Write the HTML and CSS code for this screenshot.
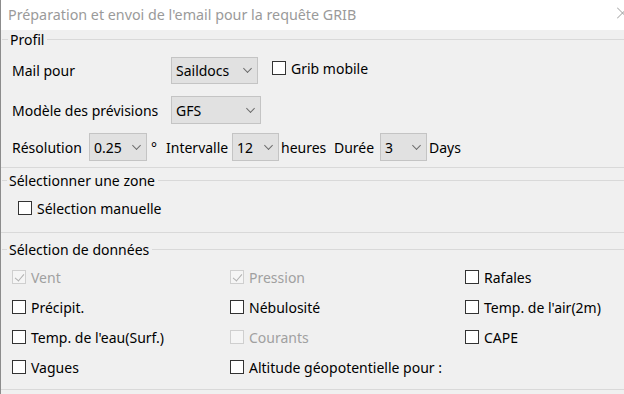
FILE: index.html
```html
<!DOCTYPE html>
<html lang="fr">
<head>
<meta charset="utf-8">
<title>GRIB</title>
<link rel="stylesheet" href="styles.css">
</head>
<body>
<div class="window">
  <div class="titlebar">
    <span class="title">Préparation et envoi de l'email pour la requête GRIB</span>
    <svg class="close" width="7" height="12" viewBox="0 0 7 12"><path d="M0 0.5 L11 11.5 M0 11.5 L11 0.5" stroke="#9a9a9a" stroke-width="1" fill="none"/></svg>
  </div>

  <div class="legend legend-profil"><span>Profil</span></div>
  <div class="row row-mail">
    <span class="lbl lbl-wide">Mail pour</span>
    <span class="combo combo-saildocs"><span>Saildocs</span><i class="chev"></i></span>
    <label class="check check-grib"><span class="box"></span>Grib mobile</label>
  </div>
  <div class="row row-model">
    <span class="lbl lbl-wide">Modèle des prévisions</span>
    <span class="combo combo-gfs"><span>GFS</span><i class="chev"></i></span>
  </div>
  <div class="row row-res">
    <span class="lbl lbl-res">Résolution</span>
    <span class="combo combo-res"><span>0.25</span><i class="chev"></i></span>
    <span class="deg">°</span>
    <span class="lbl lbl-int">Intervalle</span>
    <span class="combo combo-small"><span>12</span><i class="chev"></i></span>
    <span class="lbl lbl-heures">heures</span>
    <span class="lbl lbl-duree">Durée</span>
    <span class="combo combo-small"><span>3</span><i class="chev"></i></span>
    <span class="lbl lbl-days">Days</span>
  </div>
  <div class="sep sep-profil"></div>

  <div class="legend legend-zone"><span>Sélectionner une zone</span></div>
  <div class="row row-zone">
    <label class="check"><span class="box"></span>Sélection manuelle</label>
  </div>
  <div class="sep sep-zone"></div>

  <div class="legend legend-data"><span>Sélection de données</span></div>
  <div class="grid">
    <label class="check disabled"><span class="box checked"></span>Vent</label>
    <label class="check disabled"><span class="box checked"></span>Pression</label>
    <label class="check"><span class="box"></span>Rafales</label>

    <label class="check"><span class="box"></span>Précipit.</label>
    <label class="check"><span class="box"></span>Nébulosité</label>
    <label class="check"><span class="box"></span>Temp. de l'air(2m)</label>

    <label class="check"><span class="box"></span>Temp. de l'eau(Surf.)</label>
    <label class="check disabled"><span class="box"></span>Courants</label>
    <label class="check"><span class="box"></span>CAPE</label>

    <label class="check"><span class="box"></span>Vagues</label>
    <label class="check"><span class="box"></span>Altitude géopotentielle pour :</label>
    <span></span>
  </div>
  <div class="sep sep-data"></div>
</div>
</body>
</html>
```

FILE: styles.css
```css
html, body {
  margin: 0;
  padding: 0;
}
body {
  width: 624px;
  height: 394px;
  overflow: hidden;
  background: #f0f0f0;
  font-family: "Noto Sans", "Open Sans", sans-serif;
  font-size: 14px;
  color: #000;
}
.window {
  height: 394px;
  border-left: 1px solid #8c8c8c;
  box-sizing: border-box;
  display: flex;
  flex-direction: column;
}
.titlebar {
  height: 30px;
  background: #fff;
  display: flex;
  align-items: center;
  justify-content: space-between;
  padding-left: 7px;
  flex: none;
}
.title {
  color: #9a9a9a;
  font-size: 14.3px;
  margin-top: -2px;
}
.close {
  margin-top: -4px;
}

.legend {
  height: 18px;
  display: flex;
  align-items: center;
  flex: none;
}
.legend::before {
  content: "";
  width: 6px;
  border-top: 1px solid #d9d9d9;
  margin-left: 1px;
}
.legend::after {
  content: "";
  flex: 1;
  border-top: 1px solid #d9d9d9;
}
.legend span {
  padding: 0 3px 0 2px;
}
.legend-zone::before,
.legend-data::before {
  width: 5px;
}

.sep {
  border-top: 1px solid #d9d9d9;
  flex: none;
}

.row {
  display: flex;
  align-items: center;
  height: 28px;
  padding-left: 11px;
  flex: none;
}
.row-mail { margin-top: 8px; }
.row-model { margin-top: 12px; }
.row-res { margin-top: 9px; }
.sep-profil { margin-top: 6px; }
.legend-zone { margin-top: 3px; }
.row-zone { margin-top: 9px; height: 20px; padding-left: 17px; }
.sep-zone { margin-top: 14px; }
.legend-data { margin-top: 7px; }
.sep-data { margin-top: 7px; }

.lbl-wide { width: 159px; }
.lbl-res { width: 77px; }
.lbl-int { width: 66px; }
.lbl-heures { width: 53px; margin-left: 2px; }
.lbl-duree { width: 46px; }
.lbl-days { margin-left: 2px; }
.deg { width: 19px; padding-left: 4px; box-sizing: border-box; }

.combo {
  display: flex;
  align-items: center;
  justify-content: space-between;
  height: 28px;
  box-sizing: border-box;
  background: #e1e1e1;
  border: 1px solid #c4c4c4;
  padding: 1px 6px 0 4px;
}
.combo-saildocs { width: 87px; height: 27px; }
.combo-gfs { width: 90px; }
.combo-res { width: 58px; }
.combo-small { width: 47px; }
.chev {
  width: 6px;
  height: 6px;
  border-right: 1px solid #6a6a6a;
  border-bottom: 1px solid #6a6a6a;
  transform: rotate(45deg) scale(0.9, 0.9);
  margin-top: -4px;
}

.check {
  display: flex;
  align-items: center;
  gap: 5px;
  white-space: nowrap;
}
.check-grib { margin-left: 14px; margin-top: -4px; }
.box {
  width: 14px;
  height: 14px;
  box-sizing: border-box;
  border: 1px solid #333;
  background: #fff;
  position: relative;
  flex: none;
}
.disabled { color: #a0a0a0; }
.disabled .box {
  border-color: #cfcfcf;
  background: #f5f5f5;
}
.box.checked::after {
  content: "";
  position: absolute;
  left: 4px;
  top: 1px;
  width: 4px;
  height: 8px;
  border-right: 1px solid #b0b0b0;
  border-bottom: 1px solid #b0b0b0;
  transform: rotate(40deg);
}

.grid {
  display: grid;
  grid-template-columns: 218px 235px 1fr;
  grid-auto-rows: 30px;
  align-items: center;
  padding-left: 11px;
  margin-top: 4px;
  flex: none;
}
```
